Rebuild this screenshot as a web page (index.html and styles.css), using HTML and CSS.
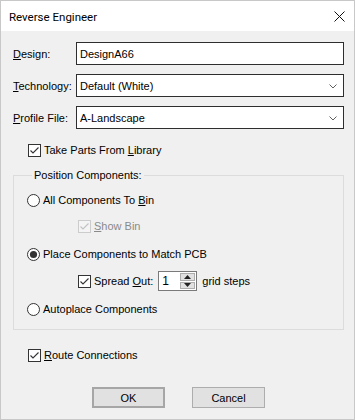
FILE: index.html
```html
<!DOCTYPE html>
<html lang="en">
<head>
  <meta name="viewport" content="width=device-width, initial-scale=1">
  <link rel="stylesheet" href="styles.css">
  <title>Reverse Engineer</title>
</head>
<body>

<div class="window">
  <!-- Title Bar -->
  <div class="titlebar">
    <span class="title">Reverse Engineer</span>
    <svg class="close" width="11" height="11" viewBox="0 0 11 11">
      <path d="M0.5 0.5 L10.5 10.5 M10.5 0.5 L0.5 10.5" stroke="#111" stroke-width="1" fill="none"/>
    </svg>
  </div>

  <div class="content">
    <!-- Design / Technology / Profile -->
    <div class="field-row">
      <label class="field-label"><u>D</u>esign:</label>
      <div class="textbox">DesignA66</div>
    </div>
    <div class="field-row">
      <label class="field-label"><u>T</u>echnology:</label>
      <div class="textbox combo">
        <span>Default (White)</span>
        <svg class="chevron" width="8" height="5" viewBox="0 0 8 5"><path d="M0.5 0.5 L4 4 L7.5 0.5" stroke="#606060" fill="none"/></svg>
      </div>
    </div>
    <div class="field-row">
      <label class="field-label"><u>P</u>rofile File:</label>
      <div class="textbox combo">
        <span>A-Landscape</span>
        <svg class="chevron" width="8" height="5" viewBox="0 0 8 5"><path d="M0.5 0.5 L4 4 L7.5 0.5" stroke="#606060" fill="none"/></svg>
      </div>
    </div>

    <div class="check-row take-parts">
      <span class="checkbox"><svg width="11" height="11" viewBox="0 0 11 11"><path d="M1.5 5.5 L4 8 L9.5 2.5" stroke="#333" stroke-width="1.1" fill="none"/></svg></span>
      <span>Take Parts From <u>L</u>ibrary</span>
    </div>

    <!-- Position Components group -->
    <fieldset class="group">
      <legend>Position Components:</legend>

      <div class="check-row opt-bin">
        <svg class="radio" width="13" height="13" viewBox="0 0 13 13"><circle cx="6.5" cy="6.5" r="6" fill="#fff" stroke="#333"/></svg>
        <span>All Components To <u>B</u>in</span>
      </div>
      <div class="check-row sub-option show-bin disabled">
        <span class="checkbox"><svg width="11" height="11" viewBox="0 0 11 11"><path d="M1.5 5.5 L4 8 L9.5 2.5" stroke="#c2c2c2" stroke-width="1.1" fill="none"/></svg></span>
        <span><u>S</u>how Bin</span>
      </div>
      <div class="check-row opt-place">
        <svg class="radio" width="13" height="13" viewBox="0 0 13 13"><circle cx="6.5" cy="6.5" r="6" fill="#fff" stroke="#333"/><circle cx="6.5" cy="6.5" r="3.6" fill="#333"/></svg>
        <span>Place Components to Match PCB</span>
      </div>
      <div class="check-row sub-option spread">
        <span class="checkbox"><svg width="11" height="11" viewBox="0 0 11 11"><path d="M1.5 5.5 L4 8 L9.5 2.5" stroke="#333" stroke-width="1.1" fill="none"/></svg></span>
        <span>Spread <u>O</u>ut:</span>
        <div class="spinbox">
          <span class="spin-value">1</span>
          <div class="spin-buttons">
            <span class="spin-btn"><svg width="7" height="4" viewBox="0 0 7 4"><path d="M0 4 L3.5 0 L7 4 Z" fill="#222"/></svg></span>
            <span class="spin-btn"><svg width="7" height="4" viewBox="0 0 7 4"><path d="M0 0 L3.5 4 L7 0 Z" fill="#222"/></svg></span>
          </div>
        </div>
        <span class="grid-steps">grid steps</span>
      </div>
      <div class="check-row opt-auto">
        <svg class="radio" width="13" height="13" viewBox="0 0 13 13"><circle cx="6.5" cy="6.5" r="6" fill="#fff" stroke="#333"/></svg>
        <span>Autoplace Components</span>
      </div>
    </fieldset>

    <div class="check-row route">
      <span class="checkbox"><svg width="11" height="11" viewBox="0 0 11 11"><path d="M1.5 5.5 L4 8 L9.5 2.5" stroke="#333" stroke-width="1.1" fill="none"/></svg></span>
      <span><u>R</u>oute Connections</span>
    </div>

    <!-- Buttons -->
    <div class="buttons">
      <button class="btn btn-default">OK</button>
      <button class="btn">Cancel</button>
    </div>
  </div>
</div>

</body>
</html>
```

FILE: styles.css
```css
body {
  margin: 0;
  padding: 0;
  font-family: "Liberation Sans", Arial, sans-serif;
  font-size: 11px;
  color: #000;
  background-color: #f0f0f0;
}
.window {
  width: 355px;
  height: 420px;
  box-sizing: border-box;
  border: 1px solid #c8c8c8;
  background-color: #f0f0f0;
}
.titlebar {
  height: 30px;
  background-color: #fff;
  display: flex;
  align-items: center;
  justify-content: space-between;
  padding: 0 9px 0 8px;
}
.titlebar .title {
  font-family: Roboto, "Liberation Sans", sans-serif;
  font-size: 11.5px;
  margin-top: 1px;
}
.titlebar .close {
  display: block;
  margin-top: 1px;
}
.content {
  padding: 11px 10px 0 11px;
}
.field-row {
  display: flex;
  align-items: center;
  height: 23px;
  margin-bottom: 9px;
}
.field-label {
  width: 64px;
  padding-left: 1px;
  box-sizing: border-box;
}
.textbox {
  flex: 1;
  height: 23px;
  box-sizing: border-box;
  border: 1px solid #2e2e2e;
  background-color: #fff;
  padding: 0 3px;
  display: flex;
  align-items: center;
}
.textbox.combo {
  justify-content: space-between;
  padding-right: 6px;
}
.chevron {
  display: block;
  margin-top: 2px;
}
.check-row {
  display: flex;
  align-items: center;
  height: 16px;
}
.checkbox {
  width: 13px;
  height: 13px;
  box-sizing: border-box;
  border: 1px solid #333;
  background-color: #fff;
  margin-right: 3px;
  display: flex;
}
.checkbox svg {
  display: block;
}
.radio {
  display: block;
  margin-right: 3px;
}
.take-parts {
  margin-top: 13px;
  margin-left: 16px;
}
.group {
  margin: 11px 0 0 1px;
  padding: 0 0 12px 13px;
  border: 1px solid #dcdcdc;
}
.group legend {
  margin-left: 5px;
  padding: 0 2px;
  line-height: 13px;
}
.opt-bin {
  margin-top: 10px;
}
.sub-option {
  margin-left: 51px;
}
.show-bin {
  margin-top: 10px;
}
.disabled {
  color: #8a8a8a;
}
.disabled .checkbox {
  border-color: #cccccc;
  background-color: #f4f4f4;
}
.opt-place {
  margin-top: 12px;
}
.spread {
  height: 20px;
  margin-top: 9px;
}
.spinbox {
  display: flex;
  width: 39px;
  height: 20px;
  box-sizing: border-box;
  border: 1px solid #7a7a7a;
  background-color: #fff;
  margin-left: 5px;
}
.spin-value {
  flex: 1;
  padding-left: 3px;
  line-height: 18px;
  font-size: 12px;
}
.spin-buttons {
  width: 15px;
  display: flex;
  flex-direction: column;
  padding: 1px;
  gap: 1px;
}
.spin-btn {
  flex: 1;
  background-color: #e1e1e1;
  border: 1px solid #adadad;
  display: flex;
  align-items: center;
  justify-content: center;
}
.spin-btn svg {
  display: block;
}
.grid-steps {
  margin-left: 5px;
}
.opt-auto {
  margin-top: 10px;
}
.route {
  margin-top: 17px;
  margin-left: 16px;
}
.buttons {
  display: flex;
  justify-content: center;
  gap: 27px;
  margin-top: 24px;
  padding-left: 1px;
}
.btn {
  width: 73px;
  height: 21px;
  box-sizing: border-box;
  font-family: "Liberation Sans", Arial, sans-serif;
  font-size: 11px;
  color: #000;
  background-color: #e1e1e1;
  border: 1px solid #adadad;
  padding: 0;
  margin: 0;
}
.btn-default {
  border: 2px solid #a6a6a6;
}
```
